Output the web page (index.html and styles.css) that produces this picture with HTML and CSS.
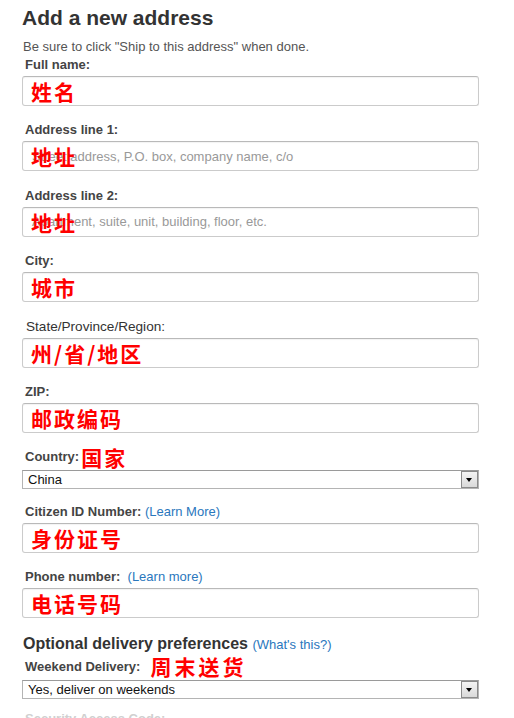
FILE: index.html
```html
<!DOCTYPE html>
<html lang="en">
<head>
    <meta charset="UTF-8">
    <meta name="viewport" content="width=device-width, initial-scale=1.0">
    <title>Add a new address</title>
    <link rel="stylesheet" href="styles.css">
</head>
<body>
    <div class="page">
        <h1>Add a new address</h1>
        <p class="hint">Be sure to click "Ship to this address" when done.</p>

        <div class="field">
            <div class="label">Full name:</div>
            <div class="box"><span class="note">姓名</span></div>
        </div>

        <div class="field">
            <div class="label">Address line 1:</div>
            <div class="box">
                <span class="placeholder">Street address, P.O. box, company name, c/o</span>
                <span class="note">地址</span>
            </div>
        </div>

        <div class="field">
            <div class="label">Address line 2:</div>
            <div class="box">
                <span class="placeholder">Apartment, suite, unit, building, floor, etc.</span>
                <span class="note">地址</span>
            </div>
        </div>

        <div class="field">
            <div class="label">City:</div>
            <div class="box"><span class="note">城市</span></div>
        </div>

        <div class="field">
            <div class="label plain">State/Province/Region:</div>
            <div class="box"><span class="note">州/省/地区</span></div>
        </div>

        <div class="field">
            <div class="label">ZIP:</div>
            <div class="box"><span class="note">邮政编码</span></div>
        </div>

        <div class="field country">
            <div class="label">Country:<span class="note inline">国家</span></div>
            <div class="select">
                <span class="value">China</span>
                <span class="arrow"></span>
            </div>
        </div>

        <div class="field">
            <div class="label">Citizen ID Number: <a class="link" href="#">(Learn More)</a></div>
            <div class="box"><span class="note">身份证号</span></div>
        </div>

        <div class="field">
            <div class="label">Phone number: &nbsp;<a class="link" href="#">(Learn more)</a></div>
            <div class="box"><span class="note">电话号码</span></div>
        </div>

        <h2>Optional delivery preferences <a class="link" href="#">(What's this?)</a></h2>

        <div class="field weekend">
            <div class="label">Weekend Delivery: &nbsp;<span class="note inline">周末送货</span></div>
            <div class="select">
                <span class="value">Yes, deliver on weekends</span>
                <span class="arrow"></span>
            </div>
        </div>

        <div class="field">
            <div class="label faint">Security Access Code:</div>
        </div>
    </div>
</body>
</html>
```

FILE: styles.css
```css
body {
    margin: 0;
    padding: 0;
    background: #fff;
    font-family: 'Liberation Sans', Arial, sans-serif;
    color: #333;
}

.page {
    padding: 0 35px 0 22px;
}

h1 {
    margin: 0;
    padding-top: 6px;
    font-size: 21px;
    line-height: 24px;
    font-weight: bold;
    color: #333;
}

.hint {
    margin: 10px 0 0 1px;
    font-size: 13px;
    line-height: 14px;
    color: #555;
}

.field {
    margin-bottom: 16.4px;
}

.hint + .field {
    margin-top: 3px;
}

.label {
    display: flex;
    align-items: center;
    height: 15px;
    margin: 0 0 4px 3px;
    font-size: 13px;
    font-weight: bold;
    color: #444;
    white-space: pre;
}

.label.plain {
    font-weight: normal;
    color: #333;
    margin-left: 4px;
    font-size: 13.6px;
}

.label.faint {
    color: #d0d0d0;
}

.link {
    font-weight: normal;
    color: #2a77bd;
    text-decoration: none;
}

.box {
    display: grid;
    align-items: center;
    height: 30px;
    box-sizing: border-box;
    border: 1px solid #cbcbcb;
    border-top-color: #b9b9b9;
    border-radius: 3px;
    background: #fff;
    box-shadow: inset 0 1px 1px rgba(0, 0, 0, 0.05);
}

/* placeholder and red note share the same cell */
.box > span {
    grid-area: 1 / 1;
}

.placeholder {
    padding-left: 9px;
    font-size: 13px;
    color: #999;
}

.note {
    padding-left: 8px;
    font-family: 'Noto Sans CJK SC', sans-serif;
    font-size: 21px;
    line-height: 24px;
    font-weight: bold;
    letter-spacing: 2px;
    color: #f00;
}

.note.inline {
    padding-left: 2px;
    font-size: 21px;
    letter-spacing: 2px;
}

.country {
    margin-top: 1px;
    margin-bottom: 14.4px;
}

.country .label {
    margin-bottom: 6px;
}

.weekend {
    margin-bottom: 12px;
}

.weekend .label {
    margin-bottom: 6px;
}

.weekend .note.inline {
    padding-left: 3px;
    letter-spacing: 3px;
}

.select {
    display: flex;
    align-items: center;
    justify-content: space-between;
    height: 19px;
    box-sizing: border-box;
    border: 1px solid #b4b4b4;
    border-top-color: #9a9a9a;
    background: #fff;
}

.value {
    padding-left: 5px;
    font-size: 13px;
    color: #111;
}

.arrow {
    position: relative;
    width: 17px;
    height: 17px;
    box-sizing: border-box;
    border: 1px solid #8a8a8a;
    background: linear-gradient(to bottom, #f4f4f4, #d9d9d9);
}

.arrow::after {
    content: "";
    position: absolute;
    left: 4px;
    top: 6px;
    border-left: 3.5px solid transparent;
    border-right: 3.5px solid transparent;
    border-top: 4px solid #000;
}

h2 {
    margin: 0 0 5px 1px;
    font-size: 16px;
    line-height: 18px;
    font-weight: bold;
    color: #333;
}

h2 .link {
    font-size: 13px;
}
```
